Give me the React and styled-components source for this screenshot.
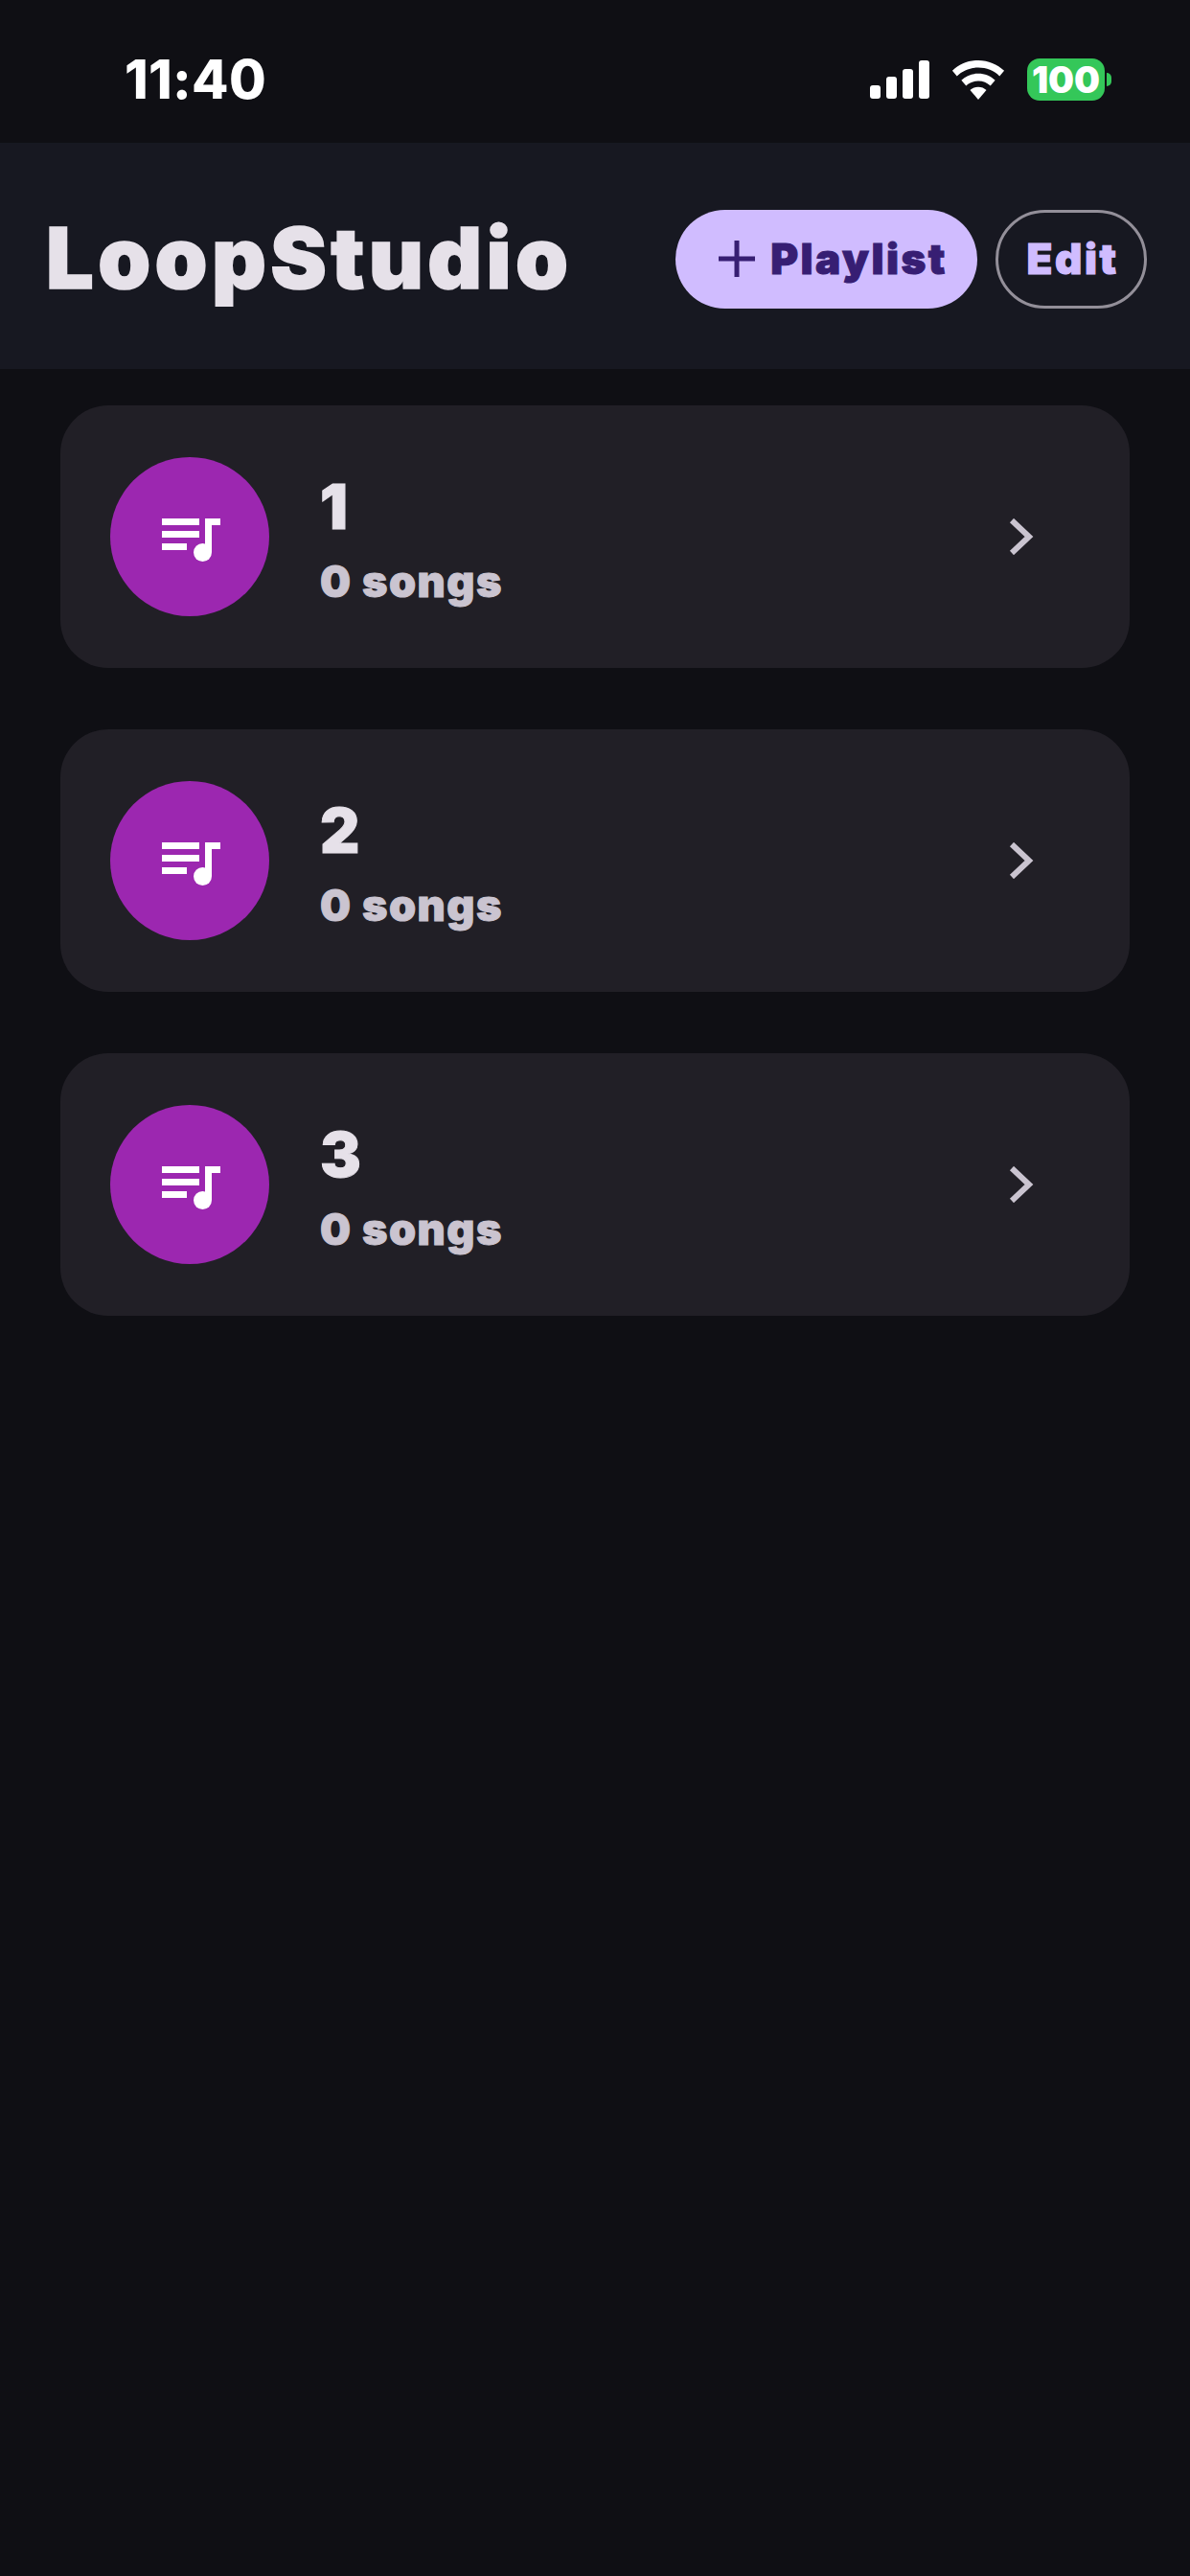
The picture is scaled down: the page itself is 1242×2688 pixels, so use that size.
import React from 'react'
import styled, { createGlobalStyle } from 'styled-components';

const Global = createGlobalStyle`
    html, body {
        margin: 0;
        padding: 0;
        background: #0f0f14;
    }
    * {
        box-sizing: border-box;
    }
`;

const playlists = ['1', '2', '3'];

const SignalIcon = () => (
    <svg width="62" height="40" viewBox="0 0 62 40" fill="#fff">
        <rect x="0" y="26" width="11" height="14" rx="3" />
        <rect x="17" y="17" width="11" height="23" rx="3" />
        <rect x="34" y="9" width="11" height="31" rx="3" />
        <rect x="51" y="0" width="11" height="40" rx="3" />
    </svg>
);

const WifiIcon = () => (
    <svg width="56" height="41" viewBox="0 0 54 40" fill="#fff">
        <path d="M27 0C16.8 0 7.6 4 .6 10.6l4.7 5.4C11 10.600 18.600 7.400 27 7.400S43 10.600 48.700 16l4.700-5.400C46.400 4 37.200 0 27 0Z" />
        <path d="M27 13.500c-6.600 0-12.700 2.600-17.200 6.800l4.800 5.500c3.200-3 7.600-4.900 12.400-4.900s9.200 1.900 12.400 4.900l4.800-5.500C39.700 16.100 33.600 13.500 27 13.500Z" />
        <path d="M27 27c-3.200 0-6.100 1.200-8.300 3.200L27 40l8.300-9.800C33.100 28.200 30.200 27 27 27Z" />
    </svg>
);

const PlaylistIcon = () => (
    <svg width="61" height="45" viewBox="0 0 61 45" fill="#fff">
        <rect x="0" y="0" width="39" height="7" />
        <rect x="0" y="13" width="39" height="7" />
        <rect x="0" y="26" width="26" height="7" />
        <rect x="45" y="0" width="7" height="35" />
        <rect x="45" y="0" width="16" height="7" />
        <circle cx="42.500" cy="35.500" r="9.500" />
    </svg>
);

const PlusIcon = () => (
    <svg width="38" height="38" viewBox="0 0 38 38" fill="none" stroke="#371e73" strokeWidth="5">
        <path d="M19 0V38M0 19H38" />
    </svg>
);

const ChevronIcon = () => (
    <svg width="26" height="38" viewBox="0 0 26 38" fill="none" stroke="#cac4d0" strokeWidth="6">
        <path d="M3 2L21 19L3 36" />
    </svg>
);

const App = () => {
    return (
        <Screen>
            <Global />
            <StatusBar>
                <Time>11:40</Time>
                <StatusIcons>
                    <SignalIcon />
                    <WifiIcon />
                    <Battery>100</Battery>
                </StatusIcons>
            </StatusBar>
            <Header>
                <Title>LoopStudio</Title>
                <Actions>
                    <PlaylistButton><PlusIcon />Playlist</PlaylistButton>
                    <EditButton>Edit</EditButton>
                </Actions>
            </Header>
            <List>
                {playlists.map((name) => (
                    <Card key={name}>
                        <Avatar><PlaylistIcon /></Avatar>
                        <Info>
                            <Name>{name}</Name>
                            <Count>0 songs</Count>
                        </Info>
                        <ChevronIcon />
                    </Card>
                ))}
            </List>
        </Screen>
    )
}

const Screen = styled.div`
    width: 1242px;
    height: 2688px;
    background: #0f0f14;
    font-family: Inter, "Liberation Sans", sans-serif;
    overflow: hidden;
`;

const StatusBar = styled.div`
    height: 149px;
    display: flex;
    align-items: flex-start;
    justify-content: space-between;
    padding: 60px 82px 0 130px;
`;

const Time = styled.div`
    color: #fff;
    font-size: 56px;
    line-height: 46px;
    font-weight: 800;
    letter-spacing: 0.3px;
`;

const StatusIcons = styled.div`
    display: flex;
    align-items: center;
    gap: 23px;
    height: 46px;
`;

const Battery = styled.div`
    position: relative;
    width: 81px;
    height: 44px;
    margin-right: 7px;
    border-radius: 13px;
    background: #34c759;
    color: #fff;
    font-size: 38px;
    line-height: 44px;
    font-weight: 900;
    text-align: center;
    &::after {
        content: '';
        position: absolute;
        right: -7px;
        top: 15px;
        width: 5px;
        height: 14px;
        border-radius: 0 7px 7px 0;
        background: #34c759;
    }
`;

const Header = styled.header`
    height: 236px;
    background: #171821;
    display: flex;
    align-items: center;
    justify-content: space-between;
    padding: 0 45px 0 48px;
`;

const Title = styled.h1`
    margin: 4px 0 0;
    color: #e6e1e9;
    font-size: 88px;
    line-height: 104px;
    font-weight: 900;
    letter-spacing: 4.400px;
    -webkit-text-stroke: 1.500px #e6e1e9;
`;

const Actions = styled.div`
    display: flex;
    gap: 19px;
    margin-top: 6px;
`;

const Pill = styled.button`
    height: 103px;
    border-radius: 52px;
    font-family: inherit;
    font-size: 44px;
    font-weight: 900;
    letter-spacing: 2.500px;
    display: flex;
    align-items: center;
    justify-content: center;
    padding: 0;
`;

const PlaylistButton = styled(Pill)`
    width: 315px;
    gap: 16px;
    padding-left: 14px;
    border: 0;
    background: #d0bcff;
    color: #371e73;
    -webkit-text-stroke: 1px #371e73;
`;

const EditButton = styled(Pill)`
    width: 158px;
    padding-left: 3px;
    border: 3px solid #938f99;
    background: transparent;
    color: #d0bcff;
    -webkit-text-stroke: 1px #d0bcff;
`;

const List = styled.div`
    display: flex;
    flex-direction: column;
    gap: 64px;
    padding: 38px 63px 0;
`;

const Card = styled.div`
    height: 274px;
    border-radius: 50px;
    background: #211f26;
    display: flex;
    align-items: center;
    padding: 0 100px 0 52px;
`;

const Avatar = styled.div`
    width: 166px;
    height: 166px;
    border-radius: 50%;
    background: #9c27b0;
    display: flex;
    align-items: center;
    justify-content: center;
    flex-shrink: 0;
    padding: 7px 0 0 3px;
`;

const Info = styled.div`
    flex: 1;
    margin-left: 53px;
`;

const Name = styled.div`
    color: #e6e1e9;
    font-size: 64px;
    line-height: 84px;
    font-weight: 900;
    margin-bottom: 8px;
    padding-top: 2px;
    -webkit-text-stroke: 1px #e6e1e9;
`;

const Count = styled.div`
    color: #cac4d0;
    font-size: 45px;
    line-height: 56px;
    font-weight: 900;
    letter-spacing: 1.500px;
    -webkit-text-stroke: 1px #cac4d0;
`;

export default App;
